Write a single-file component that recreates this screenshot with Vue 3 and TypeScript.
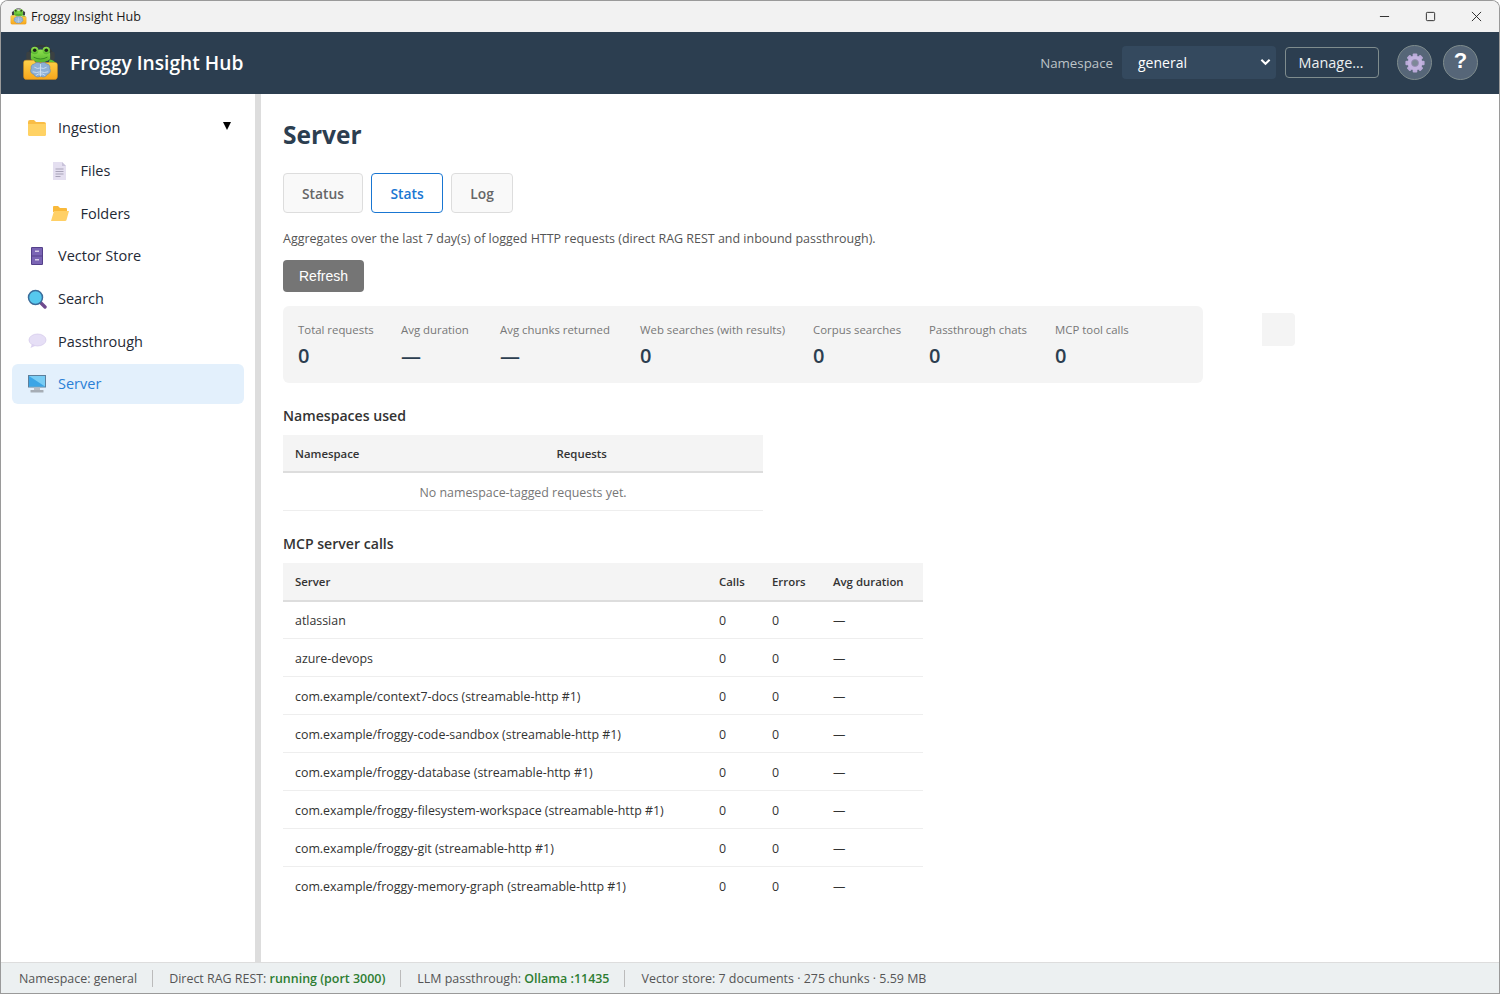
<template>
  <div class="window">
    <!-- Native title bar -->
    <div class="titlebar">
      <svg class="title-icon" viewBox="0 0 48 48"><use href="#frog-logo" /></svg>
      <span class="title-text">Froggy Insight Hub</span>
      <div class="win-controls">
        <svg viewBox="0 0 12 12" class="win-btn"><path d="M1 6h10" /></svg>
        <svg viewBox="0 0 12 12" class="win-btn"><rect x="1.5" y="1.5" width="9" height="9" rx="1" /></svg>
        <svg viewBox="0 0 12 12" class="win-btn"><path d="M1 1l10 10M11 1L1 11" /></svg>
      </div>
    </div>

    <!-- App header -->
    <header class="app-header">
      <div class="brand">
        <svg class="logo" viewBox="0 0 48 48">
          <defs>
            <linearGradient id="folder-fill" x1="0" y1="0" x2="0" y2="1">
              <stop offset="0" stop-color="#ffd24a" />
              <stop offset="1" stop-color="#f7a61c" />
            </linearGradient>
            <linearGradient id="frog-fill" x1="0" y1="0" x2="0" y2="1">
              <stop offset="0" stop-color="#8fe04e" />
              <stop offset="1" stop-color="#55b52e" />
            </linearGradient>
            <symbol id="frog-logo" viewBox="0 0 48 48">
              <path d="M9 15C9 -2 39 -2 39 15" fill="none" stroke="#33393a" stroke-width="2.600" />
              <ellipse cx="24" cy="15.500" rx="14" ry="8.500" fill="url(#frog-fill)" />
              <circle cx="16.500" cy="8.500" r="4.800" fill="url(#frog-fill)" />
              <circle cx="31.500" cy="8.500" r="4.800" fill="url(#frog-fill)" />
              <circle cx="16.500" cy="8" r="2.300" fill="#1b2418" />
              <circle cx="31.500" cy="8" r="2.300" fill="#1b2418" />
              <path d="M15 17q9 5 18 0" fill="none" stroke="#2f7d1f" stroke-width="1.100" />
              <rect x="5.500" y="10" width="6" height="11" rx="3" fill="#3b4142" />
              <rect x="36.500" y="10" width="6" height="11" rx="3" fill="#3b4142" />
              <path d="M36 20q6 1 9 6l-3 3q-4-4-8-4z" fill="#62c236" />
              <path d="M5 21h10l3 3h25q3 0 3 3v15q0 4-4 4H6q-4 0-4-4V24q0-3 3-3z" fill="url(#folder-fill)" stroke="#d98c12" stroke-width=".6" />
              <path d="M24 25c-3-2-7-1-8 1-3 0-5 3-4 6-2 3 0 7 3 7 1 3 5 5 8 3 1 2 1 0 2 0 3 2 7 0 8-3 3 0 5-4 3-7 1-3-1-6-4-6-1-2-5-3-8-1z" fill="#8eb0d6" stroke="#5f83ad" stroke-width=".7" />
              <path d="M24 26v16M16 30q4 3 8 1M32 30q-4 3-8 1M14 36q5 2 10 0M34 36q-5 2-10 0M18 41q3-3 6-2M30 41q-3-3-6-2" fill="none" stroke="#d6e4f2" stroke-width="1.100" />
            </symbol>
          </defs>
          <use href="#frog-logo" />
        </svg>
        <span class="brand-name">Froggy Insight Hub</span>
      </div>
      <div class="header-right">
        <label class="ns-label">Namespace</label>
        <div class="ns-select">
          <span>general</span>
          <svg viewBox="0 0 12 8" class="chevron"><path d="M1.500 1.500L6 6l4.500-4.500" /></svg>
        </div>
        <button class="manage-btn">Manage…</button>
        <button class="round-btn" title="Settings">
          <svg viewBox="0 0 24 24" class="gear">
            <rect v-for="a in gearTeeth" :key="a" x="9.200" y="0.500" width="5.600" height="6" rx="1.200" fill="#b9a9d8" :transform="`rotate(${a} 12 12)`" />
            <circle cx="12" cy="12" r="8.800" fill="#c2b3df" />
            <circle cx="12" cy="12" r="4.200" fill="#7d8998" stroke="#9a8cb8" stroke-width="1" />
          </svg>
        </button>
        <button class="round-btn help">?</button>
      </div>
    </header>

    <div class="body">
      <!-- Sidebar -->
      <nav class="sidebar">
        <div v-for="item in navItems" :key="item.label" class="nav-item" :class="{ child: item.child, active: item.active }">
          <svg class="nav-icon" viewBox="0 0 20 20" v-html="item.icon"></svg>
          <span class="nav-label">{{ item.label }}</span>
          <span v-if="item.caret" class="caret"></span>
        </div>
      </nav>

      <!-- Main -->
      <main class="content">
        <h1>Server</h1>
        <div class="tabs">
          <button v-for="t in tabs" :key="t" class="tab" :class="{ current: t === 'Stats' }">{{ t }}</button>
        </div>
        <p class="intro">Aggregates over the last 7 day(s) of logged HTTP requests (direct RAG REST and inbound passthrough).</p>
        <button class="refresh">Refresh</button>

        <div class="stats-row">
          <div class="stats">
            <div v-for="s in stats" :key="s.label" class="stat">
              <div class="stat-label">{{ s.label }}</div>
              <div class="stat-value">{{ s.value }}</div>
            </div>
          </div>
          <div class="stub"></div>
        </div>

        <h2>Namespaces used</h2>
        <table class="ns-table">
          <thead>
            <tr><th class="col-ns">Namespace</th><th>Requests</th></tr>
          </thead>
          <tbody>
            <tr><td colspan="2" class="empty">No namespace-tagged requests yet.</td></tr>
          </tbody>
        </table>

        <h2 class="mcp-title">MCP server calls</h2>
        <table class="mcp-table">
          <thead>
            <tr><th class="col-server">Server</th><th class="col-calls">Calls</th><th class="col-err">Errors</th><th>Avg duration</th></tr>
          </thead>
          <tbody>
            <tr v-for="s in servers" :key="s">
              <td>{{ s }}</td><td>0</td><td>0</td><td>—</td>
            </tr>
          </tbody>
        </table>
      </main>
    </div>

    <!-- Status bar -->
    <footer class="statusbar">
      <span class="seg">Namespace: general</span>
      <span class="seg">Direct RAG REST: <b>running (port 3000)</b></span>
      <span class="seg">LLM passthrough: <b>Ollama :11435</b></span>
      <span class="seg">Vector store: 7 documents · 275 chunks · 5.59 MB</span>
    </footer>
  </div>
</template>

<script setup lang="ts">
interface NavItem {
  label: string
  icon: string
  child?: boolean
  active?: boolean
  caret?: boolean
}

const gearTeeth = [0, 45, 90, 135, 180, 225, 270, 315]

const folderIcon =
  '<path d="M1 4q0-2 2-2h4l2 2h8q2 0 2 2v10q0 2-2 2H3q-2 0-2-2z" fill="#f9bd45"/><path d="M1 6h18v10q0 2-2 2H3q-2 0-2-2z" fill="#ffd264"/>'
const openFolderIcon =
  '<path d="M3 4q0-1 1-1h4l2 2h6q1 0 1 1v3H3z" fill="#f9b93a"/><path d="M4 8h15l-2.500 9q-.2 1-1.500 1H1z" fill="#ffd066"/>'
const fileIcon =
  '<path d="M3 1h9l4 4v14H3z" fill="#e4dff0"/><path d="M12 1l4 4h-4z" fill="#c9c3da"/><path d="M5.500 8h8M5.500 10.500h8M5.500 13h8M5.500 15.500h5" stroke="#a8a3b8" stroke-width="1"/>'
const storeIcon =
  '<rect x="4" y="1" width="12" height="18" rx="1" fill="#54408a"/><rect x="5" y="2" width="10" height="7.500" fill="#7a64b4"/><rect x="5" y="10.500" width="10" height="7.500" fill="#7a64b4"/><rect x="8" y="4.500" width="4" height="1.500" fill="#d5cce8"/><rect x="8" y="13" width="4" height="1.500" fill="#d5cce8"/>'
const searchIcon =
  '<path d="M13 13l5 5" stroke="#6f4a8e" stroke-width="3.400" stroke-linecap="round"/><circle cx="8.500" cy="8.500" r="7" fill="#56c8ee" stroke="#3b6c9a" stroke-width="1.500"/>'
const chatIcon =
  '<ellipse cx="10.500" cy="9" rx="8.500" ry="6" fill="#e6dff6" stroke="#d2c7ea" stroke-width=".7"/><path d="M5 13l-1.500 4 5.500-2.500z" fill="#dcd2f0"/>'
const serverIcon =
  '<rect x="1" y="1" width="18" height="12.500" fill="#5d7f9b"/><rect x="2" y="2" width="16" height="10.500" fill="#78cdf5"/><path d="M2 2l16 10.500H2z" fill="#3ba5e6"/><rect x="7" y="13.500" width="6" height="2.500" fill="#b5bcc4"/><rect x="3.500" y="16" width="13" height="2.500" rx=".6" fill="#a6adb5"/>'

const navItems: NavItem[] = [
  { label: 'Ingestion', icon: folderIcon, caret: true },
  { label: 'Files', icon: fileIcon, child: true },
  { label: 'Folders', icon: openFolderIcon, child: true },
  { label: 'Vector Store', icon: storeIcon },
  { label: 'Search', icon: searchIcon },
  { label: 'Passthrough', icon: chatIcon },
  { label: 'Server', icon: serverIcon, active: true },
]

const tabs = ['Status', 'Stats', 'Log']

const stats = [
  { label: 'Total requests', value: '0' },
  { label: 'Avg duration', value: '—' },
  { label: 'Avg chunks returned', value: '—' },
  { label: 'Web searches (with results)', value: '0' },
  { label: 'Corpus searches', value: '0' },
  { label: 'Passthrough chats', value: '0' },
  { label: 'MCP tool calls', value: '0' },
]

const servers = [
  'atlassian',
  'azure-devops',
  'com.example/context7-docs (streamable-http #1)',
  'com.example/froggy-code-sandbox (streamable-http #1)',
  'com.example/froggy-database (streamable-http #1)',
  'com.example/froggy-filesystem-workspace (streamable-http #1)',
  'com.example/froggy-git (streamable-http #1)',
  'com.example/froggy-memory-graph (streamable-http #1)',
]
</script>

<style>
html,
body {
  margin: 0;
  background: #fff;
  overflow: hidden;
}
</style>

<style scoped>
.window {
  width: 1500px;
  height: 994px;
  box-sizing: border-box;
  display: flex;
  flex-direction: column;
  border: 1px solid #9a9a9a;
  border-bottom: none;
  border-radius: 8px 8px 0 0;
  font-family: "Open Sans", "Noto Sans", sans-serif;
  color: #333;
  overflow: hidden;
}

/* ── Title bar ─────────────────────────────── */
.titlebar {
  height: 31px;
  flex: none;
  display: flex;
  align-items: center;
  background: #f2f2f2;
  padding-left: 9px;
  font-size: 12.600px;
  color: #1a1a1a;
}
.title-icon {
  width: 17px;
  height: 17px;
  margin-right: 4px;
}
.win-controls {
  margin-left: auto;
  display: flex;
  gap: 35px;
  padding-right: 17px;
}
.win-btn {
  width: 11px;
  height: 11px;
  fill: none;
  stroke: #222;
  stroke-width: 1;
}

/* ── Header ────────────────────────────────── */
.app-header {
  height: 62px;
  flex: none;
  box-sizing: border-box;
  background: #2c3e50;
  display: flex;
  align-items: center;
  justify-content: space-between;
  padding: 0 21px 1px 21px;
}
.brand {
  display: flex;
  align-items: center;
  gap: 11px;
}
.logo {
  width: 37px;
  height: 37px;
}
.brand-name {
  color: #fff;
  font-size: 19.200px;
  font-weight: 600;
}
.header-right {
  display: flex;
  align-items: center;
}
.ns-label {
  color: #bdc3c7;
  font-size: 13.300px;
  margin-right: 9px;
}
.ns-select {
  width: 154px;
  height: 33px;
  box-sizing: border-box;
  background: #34495e;
  border-radius: 4px;
  display: flex;
  align-items: center;
  justify-content: space-between;
  padding: 0 5px 0 16px;
  color: #fff;
  font-size: 14px;
}
.chevron {
  width: 11px;
  height: 8px;
  margin-top: -1px;
  fill: none;
  stroke: #fff;
  stroke-width: 2.200;
}
.manage-btn {
  margin-left: 9px;
  width: 94px;
  height: 31px;
  background: transparent;
  border: 1px solid #7f8c8d;
  border-radius: 4px;
  color: #ecf0f1;
  font: 14.400px "Open Sans", sans-serif;
  padding: 0 2px 0 0;
}
.round-btn {
  margin-left: 18px;
  width: 35px;
  height: 35px;
  box-sizing: border-box;
  border-radius: 50%;
  border: 1px solid #7f8c8d;
  background: #566678;
  display: flex;
  align-items: center;
  justify-content: center;
  padding: 0;
}
.round-btn.help {
  margin-left: 11px;
  padding-bottom: 3px;
  color: #fff;
  font: 700 22px "Liberation Sans", sans-serif;
}
.gear {
  width: 20px;
  height: 20px;
}

/* ── Body ──────────────────────────────────── */
.body {
  flex: 1;
  min-height: 0;
  display: flex;
}
.sidebar {
  width: 260px;
  flex: none;
  box-sizing: border-box;
  padding: 13.600px 11px 0 11px;
  border-right: 6px solid #ddd;
  display: flex;
  flex-direction: column;
  gap: 2.200px;
}
.nav-item {
  height: 40.500px;
  display: flex;
  align-items: center;
  border-radius: 6px;
  padding: 0 12px 0 15px;
  font-size: 14.500px;
  color: #1f2a36;
  flex: none;
}
.nav-item.child {
  padding-left: 38px;
}
.nav-item.active {
  background: #e3f0fc;
  color: #2a7fd6;
}
.nav-icon {
  width: 20px;
  height: 20px;
  margin-right: 11px;
  flex: none;
}
.nav-item.child .nav-icon {
  margin-right: 10.500px;
}
.caret {
  margin-left: auto;
  margin-top: -3px;
  margin-right: 1px;
  border-left: 4.500px solid transparent;
  border-right: 4.500px solid transparent;
  border-top: 8px solid #000;
}

/* ── Content ───────────────────────────────── */
.content {
  flex: 1;
  padding: 24px 0 0 22px;
  min-width: 0;
}
h1 {
  margin: 0 0 22px;
  font-size: 24.500px;
  line-height: 33px;
  font-weight: 700;
  color: #2c3e50;
}
.tabs {
  display: flex;
  gap: 8.500px;
}
.tab {
  height: 40px;
  padding: 0 18px;
  background: #f9f9f9;
  border: 1px solid #ddd;
  border-radius: 4px;
  font: 600 13.800px "Open Sans", sans-serif;
  color: #666;
}
.tab.current {
  background: #fff;
  border-color: #1976d2;
  color: #1976d2;
}
.intro {
  margin: 17px 0 13px;
  font-size: 12.480px;
  line-height: 17px;
  color: #555;
}
.refresh {
  display: block;
  width: 81px;
  height: 32px;
  background: #757575;
  border: none;
  border-radius: 4px;
  color: #fff;
  font: 14px "Liberation Sans", sans-serif;
  padding: 0;
}
.stats-row {
  display: flex;
  align-items: flex-start;
  margin-top: 14px;
}
.stats {
  width: 920px;
  height: 77px;
  box-sizing: border-box;
  flex: none;
  background: #f4f4f4;
  border-radius: 6px;
  padding: 15px;
  display: grid;
  grid-template-columns: 73px 69px 110px 143px 86px 96px 75px;
  column-gap: 30px;
}
.stub {
  width: 33px;
  height: 33px;
  margin: 7px 0 0 59px;
  background: #f4f4f4;
  border-radius: 0 4px 4px 0;
}
.stat-label {
  font-size: 11.400px;
  line-height: 18px;
  color: #777;
  white-space: nowrap;
}
.stat-value {
  font-size: 20px;
  line-height: 27px;
  font-weight: 600;
  color: #2c3e50;
  margin-top: 3px;
}
h2 {
  margin: 23px 0 9px;
  font-size: 14.100px;
  line-height: 20px;
  font-weight: 600;
  color: #333;
}
table {
  border-collapse: collapse;
  table-layout: fixed;
  font-size: 12.400px;
  color: #333;
}
th {
  height: 38px;
  box-sizing: border-box;
  background: #f4f4f4;
  border-bottom: 2px solid #ddd;
  text-align: left;
  font-size: 11.400px;
  font-weight: 600;
  padding: 0 12px;
}
td {
  height: 38px;
  box-sizing: border-box;
  border-bottom: 1px solid #eee;
  padding: 2px 12px 0;
}
.mcp-table tr:last-child td {
  border-bottom: none;
}
.ns-table {
  width: 480px;
}
.ns-table th {
  height: 37px;
}
.col-ns {
  width: 261.500px;
}
.empty {
  text-align: center;
  color: #777;
}
.mcp-title {
  margin-top: 23px;
}
.mcp-table {
  width: 640px;
}
.col-server {
  width: 424px;
}
.col-calls {
  width: 53px;
}
.col-err {
  width: 61px;
}

/* ── Status bar ────────────────────────────── */
.statusbar {
  height: 32px;
  flex: none;
  box-sizing: border-box;
  background: #ecf0f1;
  border-top: 1px solid #ddd;
  box-shadow: inset 0 -1px 0 #9a9a9a;
  display: flex;
  align-items: center;
  padding-left: 18px;
  font-size: 12.450px;
  color: #555;
}
.seg + .seg {
  margin-left: 15px;
  padding-left: 16px;
  border-left: 1px solid #bbb;
}
.seg b {
  font-weight: 600;
  color: #2e7d32;
}
</style>
